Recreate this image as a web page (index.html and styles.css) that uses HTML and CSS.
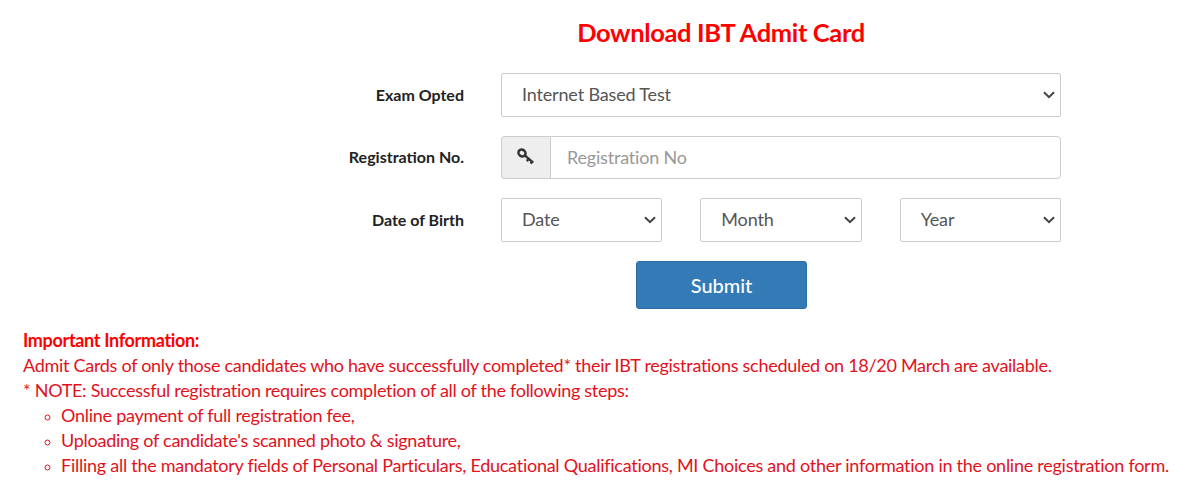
FILE: index.html
```html
<!DOCTYPE html>
<html lang="en">
<head>
<meta charset="utf-8">
<title>Download IBT Admit Card</title>
<link rel="stylesheet" href="styles.css">
</head>
<body>
<main class="page">
  <h1 class="title">Download IBT Admit Card</h1>
  <form class="form">
    <div class="row">
      <label class="label" for="exam">Exam Opted</label>
      <div class="control">
        <select class="select" id="exam"><option>Internet Based Test</option></select>
      </div>
    </div>
    <div class="row row-input">
      <label class="label" for="reg">Registration No.</label>
      <div class="control input-group">
        <span class="addon">
          <svg class="key" viewBox="0 0 18 18" width="18" height="18" aria-hidden="true">
            <ellipse cx="5" cy="5" rx="3.7" ry="3.2" transform="rotate(40 5 5)" fill="none" stroke="#333" stroke-width="2.5"/>
            <path d="M7.8 7.4l8.4 7.2M11.8 10.8l-2 2.3M15.2 13.6l-1.6 2" fill="none" stroke="#333" stroke-width="2.4"/>
          </svg>
        </span>
        <input class="input" id="reg" type="text" placeholder="Registration No">
      </div>
    </div>
    <div class="row">
      <label class="label" for="date">Date of Birth</label>
      <div class="control dob">
        <select class="select" id="date"><option>Date</option></select>
        <select class="select" aria-label="Month"><option>Month</option></select>
        <select class="select" aria-label="Year"><option>Year</option></select>
      </div>
    </div>
    <div class="actions">
      <button class="submit" type="button">Submit</button>
    </div>
  </form>
  <section class="info">
    <strong class="info-title">Important Information:</strong>
    <p class="info-line">Admit Cards of only those candidates who have successfully completed* their IBT registrations scheduled on 18/20 March are available.</p>
    <p class="info-line">* NOTE: Successful registration requires completion of all of the following steps:</p>
    <ul class="steps">
      <li>Online payment of full registration fee,</li>
      <li>Uploading of candidate's scanned photo &amp; signature,</li>
      <li>Filling all the mandatory fields of Personal Particulars, Educational Qualifications, MI Choices and other information in the online registration form.</li>
    </ul>
  </section>
</main>
</body>
</html>
```

FILE: styles.css
```css
* { box-sizing: border-box; }
html, body { margin: 0; background: #fff; }
body { font-family: Lato, "Open Sans", sans-serif; font-size: 18px; color: #333; }
.page { width: 1204px; height: 502px; overflow: hidden; padding-top: 16px; }
.title { margin: 0 0 25px; padding-left: 238px; text-align: center; font-size: 25.5px; line-height: 32px; font-weight: 700; letter-spacing: -0.36px; color: #f00; }
.form { display: flex; flex-direction: column; }
.row { display: flex; align-items: center; height: 44px; margin-bottom: 19px; }
.row-input { height: 43px; }
.label { width: 464px; margin-right: 37px; padding-bottom: 2px; text-align: right; font-size: 16px; font-weight: 700; color: #222; }
.control { width: 560px; }
.select { display: block; width: 100%; height: 44px; padding: 0 26px 2px 20px; appearance: none; background: #fff url("data:image/svg+xml,%3Csvg xmlns='http://www.w3.org/2000/svg' width='12' height='8' viewBox='0 0 12 8'%3E%3Cpath d='M1 1.2l5 5 5-5' fill='none' stroke='%23444' stroke-width='2'/%3E%3C/svg%3E") no-repeat right 5px center; border: 1px solid #ccc; border-radius: 2px; font: 18px Lato, sans-serif; letter-spacing: -0.16px; color: #555; }
.input-group { display: flex; height: 43px; }
.addon { width: 49px; display: flex; align-items: center; justify-content: center; background: #eee; border: 1px solid #ccc; border-right: 0; border-radius: 4px 0 0 4px; }
.key { margin: 0 0 2px 0; }
.input { flex: 1; min-width: 0; height: 43px; padding: 0 16px 2px; border: 1px solid #ccc; border-radius: 0 4px 4px 0; font: 18px Lato, sans-serif; letter-spacing: -0.2px; color: #555; }
.input::placeholder { color: #999; opacity: 1; }
.dob { display: flex; gap: 38px; }
.dob .select { flex: 1; min-width: 0; }
.actions { padding-left: 636px; }
.submit { display: block; width: 171px; height: 48px; border: 1px solid #2e6da4; border-radius: 3px; background: #337ab7; color: #fff; font: 500 20px Lato, sans-serif; letter-spacing: -0.05px; }
.info { margin-top: 19px; padding-left: 23px; color: #e2121c; font-size: 18px; line-height: 25px; letter-spacing: -0.29px; }
.info-title { display: block; font-weight: 700; letter-spacing: -0.33px; color: #f00; }
.info-line { margin: 0; }
.steps { margin: 0; padding: 0 0 0 38px; list-style: circle; letter-spacing: -0.26px; }
.steps li::marker { font-size: 14px; }
```
